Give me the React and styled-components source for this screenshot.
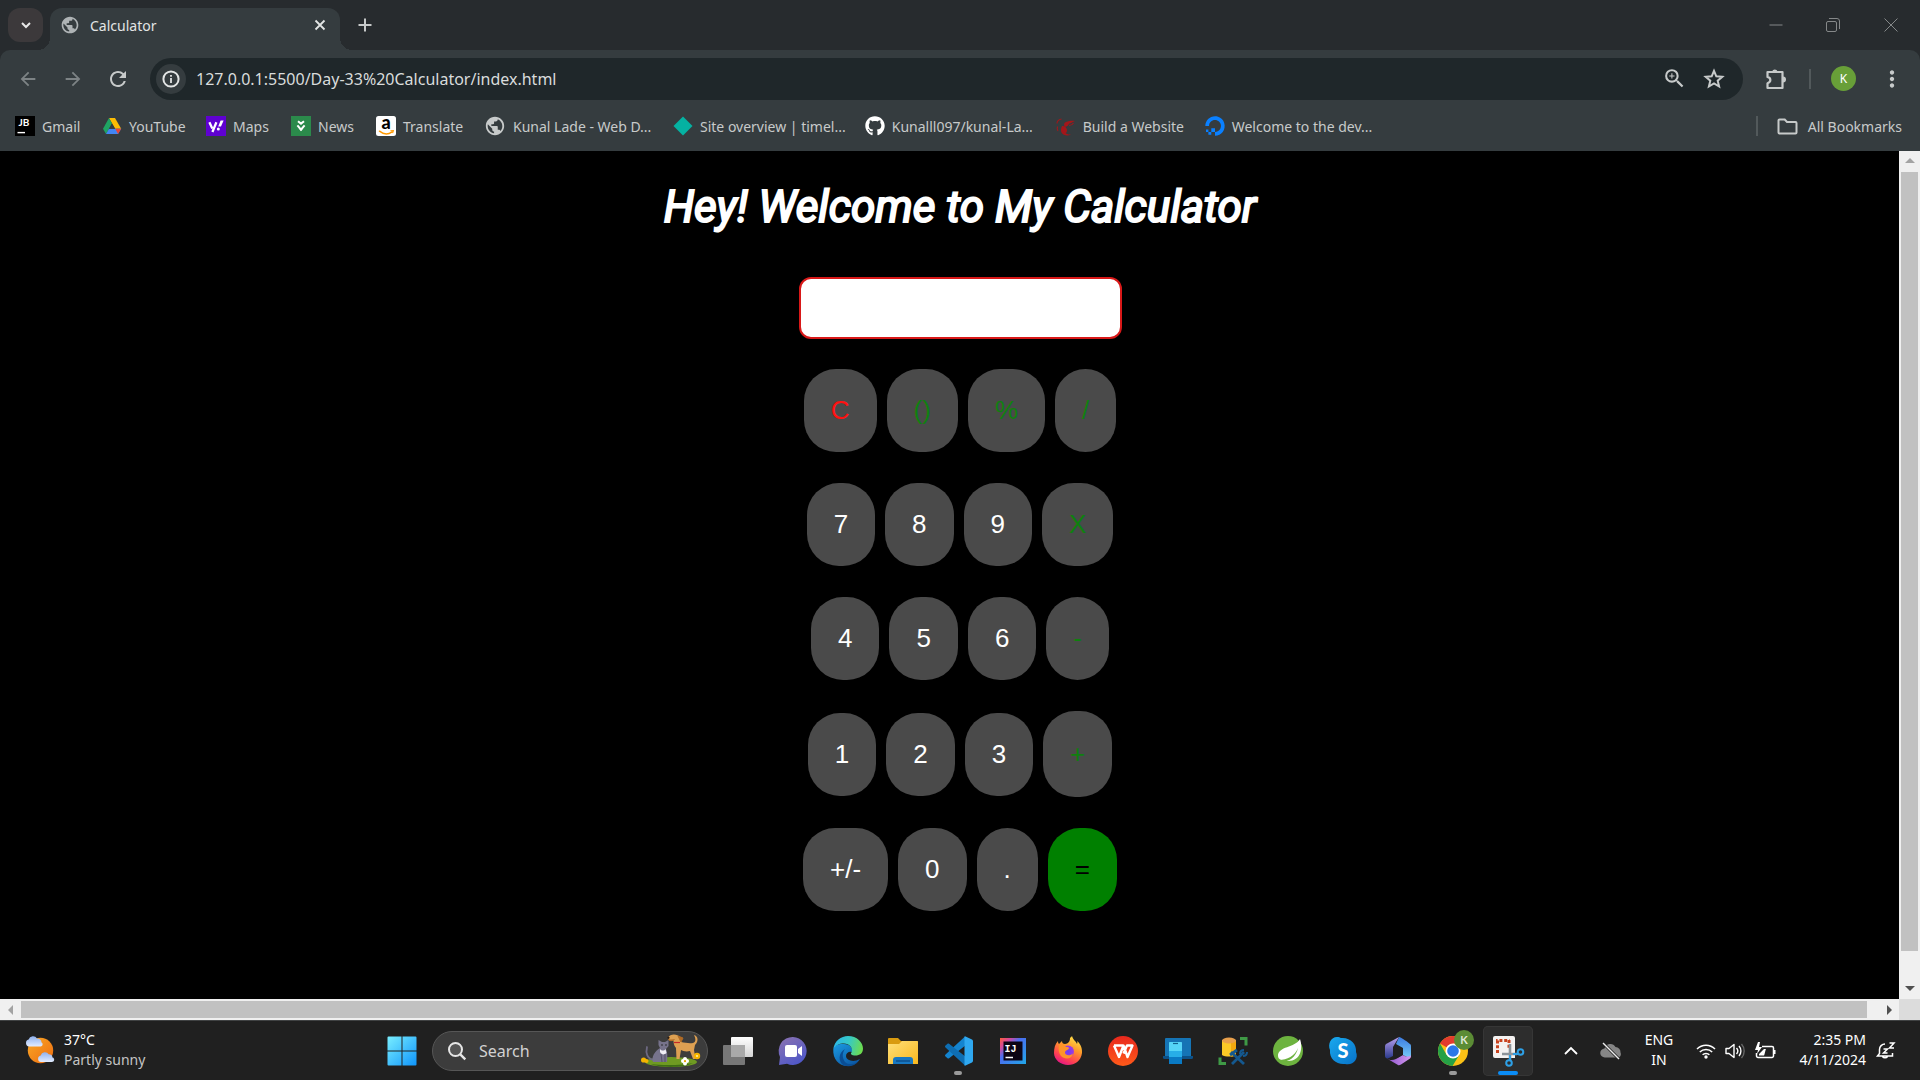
import React, { useState } from "react";
import styled, { createGlobalStyle, css } from "styled-components";
import { FaGithub, FaDigitalOcean } from "react-icons/fa";
import {
  MdPublic,
  MdArrowBack,
  MdArrowForward,
  MdRefresh,
  MdMoreVert,
  MdZoomIn,
} from "react-icons/md";

const GlobalStyle = createGlobalStyle`
  *, *::before, *::after { box-sizing: border-box; }
  body { margin: 0; background: #000; overflow: hidden; }
  button, input { font: inherit; color: inherit; }
  button { border: 0; padding: 0; background: none; cursor: pointer; }
  svg { display: block; flex: none; overflow: visible; }
`;

const Desktop = styled.div`
  height: 100vh;
  display: flex;
  flex-direction: column;
  overflow: hidden;
  font-family: "Noto Sans", "Open Sans", sans-serif;
  font-size: 14px;
  color: #c7caca;
`;

/* ---------- browser frame ---------- */

const TabStrip = styled.header`
  display: flex;
  align-items: flex-end;
  height: 50px;
  padding-left: 8px;
  background: #272b2e;
`;

const TabSearch = styled.button`
  width: 35px;
  height: 34px;
  margin: 0 7px 8px 0;
  border-radius: 12px;
  display: grid;
  place-items: center;
  background: #3c393b;
`;

const Tab = styled.div`
  position: relative;
  display: flex;
  align-items: center;
  gap: 10px;
  width: 290px;
  height: 42px;
  padding: 0 12px 8px 10px;
  border-radius: 12px 12px 0 0;
  background: #353c3f;
  color: #e3e5e5;

  &::before,
  &::after {
    content: "";
    position: absolute;
    bottom: 0;
    width: 12px;
    height: 12px;
  }
  &::before {
    right: 100%;
    background: radial-gradient(circle at 0 0, transparent 12px, #353c3f 12px);
  }
  &::after {
    left: 100%;
    background: radial-gradient(circle at 100% 0, transparent 12px, #353c3f 12px);
  }
`;

const TabTitle = styled.span`
  flex: 1;
`;

const IconButton = styled.button`
  width: ${(p) => p.$w || 16}px;
  height: ${(p) => p.$h || 32}px;
  display: grid;
  place-items: center;
  color: ${(p) => p.$color || "#c7caca"};
`;

const NewTab = styled(IconButton)`
  margin: 0 0 9px 17px;
`;

const WindowControls = styled.div`
  display: flex;
  gap: 1px;
  margin-left: auto;
  align-self: stretch;
`;

const Chrome_ = styled.div`
  background: #272b2e;
`;

const Toolbar = styled.div`
  display: flex;
  align-items: center;
  height: 57px;
  padding-left: 5px;
  border-radius: 10px 10px 0 0;
  background: #353c3f;
`;

const AddressBar = styled.label`
  flex: 1;
  display: flex;
  align-items: center;
  height: 42px;
  margin-left: 10px;
  padding: 0 9px 0 6px;
  border-radius: 21px;
  background: #1f272a;
`;

const SiteInfo = styled.button`
  width: 30px;
  height: 30px;
  border-radius: 50%;
  display: grid;
  place-items: center;
  background: #353c3f;
`;

const Address = styled.input`
  flex: 1;
  min-width: 0;
  margin: 0 10px;
  padding: 0;
  border: 0;
  outline: 0;
  background: transparent;
  font-size: 16px;
  color: #d9dcdc;
`;

const Divider = styled.span`
  width: 2px;
  height: 20px;
  background: #52595b;
`;

const Avatar = styled.button`
  width: 25px;
  height: 25px;
  margin: 0 8px 0 20px;
  border-radius: 50%;
  background: #689f38;
  color: #fff;
  font-size: 12px;
`;

const Bookmarks = styled.nav`
  display: flex;
  align-items: center;
  gap: 19px;
  height: 44px;
  padding: 0 18px 6px 15px;
  background: #353c3f;
`;

const Bookmark = styled.a`
  display: flex;
  align-items: center;
  gap: 7px;
  min-width: ${(p) => p.$w}px;
  white-space: nowrap;
  color: inherit;
  text-decoration: none;
`;

const Spacer = styled.span`
  flex: 1;
`;

const AllBookmarks = styled.button`
  display: flex;
  align-items: center;
  gap: 10px;
`;

/* ---------- page ---------- */

const Viewport = styled.div`
  flex: 1;
  min-height: 0;
  display: grid;
  grid-template: minmax(0, 1fr) 21px / minmax(0, 1fr) 21px;
  background: #dcdcdc;
`;

const Page = styled.main`
  overflow: hidden;
  background: #000;
`;

const Calculator = styled.div`
  width: 100vw;
  padding-top: 29px;
  display: flex;
  flex-direction: column;
  align-items: center;
`;

const Title = styled.h1`
  margin: 0 0 43px;
  font: italic 400 44px/54px Roboto, "Liberation Sans", sans-serif;
  -webkit-text-stroke: 2px #fff;
  color: #fff;
`;

const Display = styled.input`
  width: 323px;
  height: 62px;
  margin-bottom: 30px;
  padding: 0 14px;
  border: 2px solid #d81818;
  border-radius: 12px;
  background: #fff;
  color: #000;
  font: 26px "Liberation Sans", sans-serif;
  text-align: right;
  outline: 0;
`;

const Keypad = styled.div`
  display: flex;
  flex-direction: column;
  gap: 31px;
`;

const KeyRow = styled.div`
  display: flex;
  justify-content: center;
  align-items: center;
  gap: 10px;
`;

const Key = styled.button`
  height: ${(p) => (p.$tall ? 86 : 83)}px;
  padding: 0 27px;
  border-radius: 32px;
  background: ${(p) => p.$bg || "#4a4a4a"};
  color: ${(p) => p.$color || "#fff"};
  font: 26px "Liberation Sans", Arial, sans-serif;
`;

const scrollbar = css`
  display: flex;
  align-items: center;
  background: #f0f0f0;
`;

const VScroll = styled.div`
  ${scrollbar}
  flex-direction: column;
`;

const HScroll = styled.div`
  ${scrollbar}
`;

const VThumb = styled.div`
  flex: 1;
  width: 17px;
  margin-bottom: 27px;
  background: #c1c1c1;
`;

const HThumb = styled.div`
  flex: 1;
  height: 17px;
  margin-right: 11px;
  background: #c1c1c1;
`;

const ScrollArrow = styled.button`
  width: 21px;
  height: 21px;
  display: grid;
  place-items: center;
  color: ${(p) => (p.$off ? "#a3a3a3" : "#505050")};
`;

/* ---------- taskbar ---------- */

const Taskbar = styled.footer`
  display: grid;
  grid-template-columns: 1fr auto 1fr;
  align-items: center;
  height: 60px;
  padding-right: 10px;
  border-top: 1px solid #404243;
  background: #202020;
  line-height: 20px;
  color: #fff;
`;

const Weather = styled.button`
  justify-self: start;
  display: flex;
  align-items: center;
  gap: 9px;
  padding: 0 0 2px 25px;
  text-align: left;
`;

const Muted = styled.span`
  display: block;
  color: #c4c4c4;
`;

const Apps = styled.div`
  display: flex;
  align-items: center;
  gap: 5px;
`;

const TaskButton = styled.button`
  position: relative;
  width: 50px;
  height: 50px;
  display: grid;
  place-items: center;
  border-radius: 5px;
  ${(p) => p.$active && "background: #2d2d2d; box-shadow: inset 0 0 0 1px #363636;"}

  &::after {
    content: "";
    position: absolute;
    bottom: 1px;
    width: ${(p) => (p.$active ? 20 : 8)}px;
    height: 4px;
    border-radius: 2px;
    background: ${(p) => (p.$active ? "#0a8cf5" : p.$running ? "#9a9a9a" : "transparent")};
  }
`;

const SearchBox = styled.label`
  display: flex;
  align-items: center;
  gap: 13px;
  width: 276px;
  height: 40px;
  padding: 0 4px 0 15px;
  border: 1px solid #565656;
  border-radius: 20px;
  background: #3c3c3c;
`;

const SearchInput = styled.input`
  flex: 1;
  min-width: 0;
  padding: 0;
  border: 0;
  outline: 0;
  background: transparent;
  font-size: 16px;
  &::placeholder {
    color: #d2d2d2;
    opacity: 1;
  }
`;

const Tray = styled.div`
  justify-self: end;
  display: flex;
  align-items: center;
  padding-right: 14px;
`;

const Language = styled.button`
  width: 40px;
  margin: 0 17px 2px 8px;
  text-align: center;
`;

const Status = styled.button`
  display: flex;
  align-items: center;
  gap: 9px;
`;

const Clock = styled.button`
  width: 80px;
  margin: 0 10px 2px;
  white-space: nowrap;
  display: flex;
  flex-direction: column;
  align-items: flex-end;
`;

/* ---------- drawings ---------- */

const Svg = ({ w = 20, h = w, box, children }) => (
  <svg width={w} height={h} viewBox={box || `0 0 ${w} ${h}`} fill="none" aria-hidden="true">
    {children}
  </svg>
);

const textProps = { fontFamily: "Lato, sans-serif", textAnchor: "middle" };

const JetBrains = () => (
  <Svg>
    <rect width="20" height="20" fill="#000" />
    <text x="9" y="10" fontSize="10" fontWeight="700" fill="#fff" {...textProps}>JB</text>
    <path d="M2.5 16.6h7.5" stroke="#fff" strokeWidth="1.4" />
  </Svg>
);
const Drive = () => (
  <Svg>
    <path d="M7 2h6l6.2 10.8h-6z" fill="#fbbc04" />
    <path d="M7 2l3 5.4L4 18 1 12.8z" fill="#1fa463" />
    <path d="M7 12.8h12.2L16 18H4z" fill="#4285f4" />
    <path d="M13.3 12.8h5.9L16 18z" fill="#ea4335" />
    <path d="M10 7.6l3 5.2H7z" fill="#353c3f" />
  </Svg>
);
const Yahoo = () => (
  <Svg>
    <rect width="20" height="20" fill="#5f01d1" />
    <path d="M3.4 6.3l2.9 6.2M10.4 6.3L6.4 16" stroke="#fff" strokeWidth="2.3" />
    <path d="M14.6 4.6h3L15 10.6h-2.8z" fill="#fff" />
    <circle cx="12.3" cy="13" r="1.5" fill="#fff" />
  </Svg>
);
const News = () => (
  <Svg>
    <rect width="20" height="20" fill="#2b8a4b" />
    <path d="M7 5.2l3 2.4 3-2.4M6.4 9.4L10 13.6l3.6-4.2" stroke="#fff" strokeWidth="2" />
    <path d="M8 12.5h4L10 15z" fill="#fff" />
  </Svg>
);
const Amazon = () => (
  <Svg>
    <rect width="20" height="20" rx="2.5" fill="#fff" />
    <text x="10" y="13.4" fontSize="18" fontWeight="900" fill="#000" {...textProps}>a</text>
    <path d="M3.5 15.2c4 3.2 9 3.2 12.6.7" stroke="#f90" strokeWidth="1.5" strokeLinecap="round" />
    <path d="M14.4 14.8l3-.2-.8 2.6" stroke="#f90" strokeWidth="1.1" />
  </Svg>
);
const Diamond = () => (
  <Svg><path d="M10 .5L19.5 10 10 19.5.5 10z" fill="#05b2a2" /></Svg>
);
const Build = () => (
  <Svg>
    <path d="M9 6.5c3-1.6 6.5-2 10-1.5-2 .6-2.5 1.6-4 2-1.200.4-2 .7-2.600 1.700-.9 1.500-3 2.500-4.200 2.100C9 10 7 8.500 9 6.500z" fill="#a4161a" />
    <path d="M6.500 10.500c-.5 5 4 8.500 8.500 8-3 2-8 1-9.500-2-1-2-.5-4.500 1-6z" fill="#a4161a" />
    <path d="M6 10c3 0 5 2 5 4.500 0 1.500-1 3-2.500 3-2.500-.5-4-4-2.500-7.500z" fill="#a4161a" />
    <path d="M1 7.500c0-2 2-4 4.500-4.500M2 15c-1-1.500-1-3-.5-4.500M13 9.500c2 0 3.500-1 4.500-2.500" stroke="#a4161a" strokeWidth="1.100" />
  </Svg>
);
const Star = () => (
  <Svg w={22} h={22}>
    <path d="M11 2.800l2.300 5.500 6 .5-4.600 3.900 1.400 5.800-5.100-3.100-5.100 3.100 1.400-5.800L2.700 8.800l6-.5z" stroke="currentColor" strokeWidth="2" />
  </Svg>
);
const FolderLine = () => (
  <Svg w={21} h={17}>
    <path d="M2.500 1.500h5.200l2.300 2.500h8.500a1 1 0 0 1 1 1v9.500a1 1 0 0 1-1 1h-16a1 1 0 0 1-1-1v-12a1 1 0 0 1 1-1z" stroke="#c7caca" strokeWidth="2" />
  </Svg>
);
const Puzzle = () => (
  <Svg w={22} h={22}>
    <path d="M2.500 4h15v16h-15v-4.800c3.800-1.300 3.800-5.200 0-6.300z" stroke="#c7caca" strokeWidth="2.200" strokeLinejoin="round" />
    <path d="M7 3.500a3 3 0 0 1 5.600 0zM18 8.500a3 3 0 0 1 0 6z" fill="#c7caca" />
  </Svg>
);

const Sunny = () => (
  <Svg w={30} h={30}>
    <defs>
      <linearGradient id="sun" x1="0" y1="0" x2="1" y2="1"><stop stopColor="#f9a825" /><stop offset="1" stopColor="#ee6c10" /></linearGradient>
      <linearGradient id="cloud" x1="0" y1="0" x2="0" y2="1"><stop stopColor="#8fb1ee" /><stop offset="1" stopColor="#e2ecff" /></linearGradient>
    </defs>
    <circle cx="15.500" cy="15.500" r="12.700" fill="url(#sun)" />
    <path d="M4 11.500a3.600 3.600 0 0 1-.4-7A4.600 4.600 0 0 1 12 3.600a4 4 0 0 1 4.500 4c1.500.3 1.800 3.900-1 3.900z" fill="url(#cloud)" />
    <path d="M16 27a3.300 3.300 0 0 1-.3-6.500 4.400 4.400 0 0 1 8-1.200 3.700 3.700 0 0 1 3.800 3.200c2.500.6 2.300 4.500-.8 4.500z" fill="url(#cloud)" />
  </Svg>
);
const Start = () => (
  <Svg w={30} h={30}>
    <defs><linearGradient id="win" gradientUnits="userSpaceOnUse" x1="0" y1="0" x2="30" y2="30"><stop stopColor="#7bf0ff" /><stop offset="1" stopColor="#0d93fb" /></linearGradient></defs>
    <path d="M1.500.5h13v14h-14v-13a1 1 0 0 1 1-1zM15.500.5h13a1 1 0 0 1 1 1v13h-14zM.5 15.500h14v14h-13a1 1 0 0 1-1-1zM15.500 15.500h14v13a1 1 0 0 1-1 1h-13z" fill="url(#win)" />
  </Svg>
);
const Pets = () => (
  <Svg w={62} h={34}>
    <ellipse cx="30" cy="28" rx="26" ry="5" fill="#6f9a22" />
    <path d="M10 30c10 4 32 4 42-1-8 2-30 3-42 1z" fill="#3f6d15" />
    <path d="M6 13c-1.500 6 0 12 7 13" stroke="#6d6982" strokeWidth="1.800" strokeLinecap="round" />
    <path d="M12 28c-2-5 2-11 7-14l-1.500-3V6l3.500 2h3l3.500-2v6l-2.500 3c1.500 3 1.500 8 1 13z" fill="#77738c" />
    <path d="M19 15c1.500 2 4.500 2 5.500 0l1 4c-2 2-5 2-6.500-1z" fill="#f0eef5" />
    <path d="M20 20l1 8M24 20v8" stroke="#565269" />
    <circle cx="21" cy="11" r=".8" fill="#222" /><circle cx="25" cy="11" r=".8" fill="#222" />
    <path d="M27 3.500c2-3 6-4 10-2l3 2.500v4c4.500 1 8.500 1.500 12 1 3-1 3-4 1-8 4 1 5 6 1 10l-1 5 1.500 9h-2.500l-3-8c-4 1-7 0-9-1l-1.500 9h-3l-.5-11c-2-2-2.500-5-2.500-7.500-3 1-5.500 0-5.500-3z" fill="#dda052" />
    <path d="M27.500 5.500c2 2 4 1 6 0M37 2l3 6 2-4z" stroke="#b06b25" fill="#b06b25" />
    <circle cx="27.500" cy="3.800" r="1.100" fill="#2b1a10" /><path d="M33 8.500h6" stroke="#c62828" strokeWidth="1.200" />
    <g fill="#f5b400"><circle cx="2.600" cy="26" r="2.600" /><circle cx="5.500" cy="27" r="2" /><circle cx="56" cy="22" r="3.200" /></g>
    <circle cx="56" cy="22" r="1" fill="#fff2b0" />
    <g fill="#fff"><circle cx="42" cy="27" r="2" /><circle cx="46" cy="27" r="2" /><circle cx="44" cy="25" r="2" /><circle cx="44" cy="29.500" r="2" /></g>
    <circle cx="44" cy="27.200" r="1.100" fill="#e6a400" />
  </Svg>
);
const TaskView = () => (
  <Svg w={30} h={28}>
    <defs><linearGradient id="tv" x1="0" y1="0" x2="0" y2="1"><stop stopColor="#fff" /><stop offset="1" stopColor="#d4d4d4" /></linearGradient></defs>
    <rect x="8" width="22" height="20" rx="1" fill="url(#tv)" />
    <rect y="8" width="22" height="20" rx="1" fill="#777" />
    <path d="M8 8h14v12H8z" fill="#a9a9a9" />
  </Svg>
);
const Chat = () => (
  <Svg w={30} h={30}>
    <defs><linearGradient id="chat" x1="0" y1="0" x2="0.600" y2="1"><stop stopColor="#8d73b0" /><stop offset="1" stopColor="#5058c8" /></linearGradient></defs>
    <path d="M15 1a14 14 0 1 1-6 26.800L1 29l1-8A14 14 0 0 1 15 1z" fill="url(#chat)" />
    <rect x="7" y="9" width="12" height="12" rx="2" fill="#fff" />
    <path d="M20 13l4-3v10l-4-3z" fill="#fff" />
  </Svg>
);
const Edge = () => (
  <Svg w={30} h={30}>
    <defs>
      <linearGradient id="e1" x1="0" y1="0.300" x2="1" y2="0.500"><stop stopColor="#2bb6ea" /><stop offset="0.500" stopColor="#36c9c6" /><stop offset="1" stopColor="#6ddc4e" /></linearGradient>
      <linearGradient id="e2" x1="0" y1="0" x2="0.700" y2="1"><stop stopColor="#1b9be2" /><stop offset="1" stopColor="#0b57a4" /></linearGradient>
    </defs>
    <path d="M.3 13C2 8 7 8 11 8c6 0 9 4 8 8-3-1-6 1-6 4 0 4 7 7 14 3-3 5-8 7-13 7C6 30-.5 23 .3 13z" fill="url(#e2)" />
    <path d="M12 13c-3 4-3 9 0 13 3 3 8 3 13 0-4 4-9 5-14 3.500C5 26 5 17 12 13z" fill="#0a4d94" />
    <path d="M.3 13C1.500 5 8 0 15 0c9 0 15 6.500 15 12.500 0 5-3.500 7-7.500 7-4 0-5.500-1.500-4-3C20.500 12 16.500 7.500 11 7.500 6 7.500 2 9.500.3 13z" fill="url(#e1)" />
  </Svg>
);
const Explorer = () => (
  <Svg w={30} h={30}>
    <defs><linearGradient id="fo" x1="0" y1="0" x2="1" y2="1"><stop stopColor="#ffe07a" /><stop offset="1" stopColor="#f9b81e" /></linearGradient></defs>
    <path d="M0 3a1 1 0 0 1 1-1h9l3 3h16a1 1 0 0 1 1 1v8H0z" fill="#d99b10" />
    <path d="M0 8h11l3-3h15a1 1 0 0 1 1 1v22H0z" fill="url(#fo)" />
    <path d="M5 28v-4a3 3 0 0 1 3-3h14a3 3 0 0 1 3 3v4z" fill="#1878c2" />
    <path d="M8 25h14" stroke="#0c4f8c" strokeWidth="1.500" />
  </Svg>
);
const Code = () => (
  <Svg w={30} h={30}>
    <path d="M22 .5L2.500 18.500a1.300 1.300 0 0 0 0 2l2 1.700c.5.400 1.100.400 1.600 0L23 9z" fill="#1484cf" />
    <path d="M22 29.500L2.500 11.500a1.300 1.300 0 0 1 0-2l2-1.700c.5-.4 1.100-.4 1.600 0L23 21z" fill="#0e6eb3" />
    <path d="M22 .3l7 3.200a2 2 0 0 1 1 1.700v19.600a2 2 0 0 1-1 1.700l-7 3.200c-.3 0-.6-.2-.5-.5V.8c0-.3.2-.5.5-.5z" fill="#2fa8f0" />
  </Svg>
);
const Intellij = () => (
  <Svg w={26} h={26}>
    <defs><linearGradient id="ij" x1="0" y1="0" x2="1" y2="1"><stop stopColor="#fc5e3a" /><stop offset="0.200" stopColor="#d6489a" /><stop offset="0.400" stopColor="#4a6ef0" /><stop offset="1" stopColor="#21a8e8" /></linearGradient></defs>
    <rect width="26" height="26" fill="url(#ij)" />
    <rect x="3.500" y="3.500" width="19" height="19" fill="#0c0414" />
    <text x="10.500" y="14" fontSize="10" fontWeight="700" fill="#fff" textAnchor="middle" fontFamily="Liberation Mono, monospace">IJ</text>
    <path d="M5.500 19.500h7.500" stroke="#fff" strokeWidth="1.500" />
  </Svg>
);
const Firefox = () => (
  <Svg w={30} h={30}>
    <defs>
      <linearGradient id="ff" x1="0.800" y1="0" x2="0.300" y2="1"><stop stopColor="#ffe84a" /><stop offset="0.400" stopColor="#ff9a2a" /><stop offset="0.750" stopColor="#ff4350" /><stop offset="1" stopColor="#e31587" /></linearGradient>
      <radialGradient id="fp"><stop stopColor="#6a3ff0" /><stop offset="1" stopColor="#a23be0" /></radialGradient>
    </defs>
    <path d="M1 17c0-5 1-9 4-12 0 2 .5 2.500 1 3l3-3c0 2 1 3 3 3 3-.5 5-2 5-6 1-1 2-2 2-2 1 4 4 5 5 8 .5-1 .5-2 .3-3 4 4 5 8 4.700 12C28 25 22 29 15 29S1 24 1 17z" fill="url(#ff)" />
    <circle cx="15" cy="15.500" r="6" fill="url(#fp)" />
    <path d="M6 9c3-1 6 0 7 2 2 0 3 .3 3 1.500-1 1.500-4 2-4 4 0 3 5 4 8 1-1 5-6 6-10 4s-5-8-4-12.500z" fill="#ff9428" />
  </Svg>
);
const Wps = () => (
  <Svg w={30} h={30}>
    <defs><linearGradient id="wp" x1="0" y1="0" x2="0" y2="1"><stop stopColor="#e8281d" /><stop offset="1" stopColor="#ff5a1a" /></linearGradient></defs>
    <circle cx="15" cy="15" r="15" fill="url(#wp)" />
    <path d="M6 9.500h9.500M6 9.500l5 11.500 4.500-11.500 4 11.500 5-11.500h-5.500l-3.500 8" stroke="#fff" strokeWidth="2.400" strokeLinejoin="round" />
  </Svg>
);
const PhoneLink = () => (
  <Svg w={30} h={28}>
    <path d="M3 1h24a1 1 0 0 1 1 1v17H2V2a1 1 0 0 1 1-1z" fill="#1574b5" />
    <path d="M0 19h30v1.500a1.500 1.500 0 0 1-1.500 1.500h-27A1.500 1.500 0 0 1 0 20.500z" fill="#0c5188" />
    <rect x="6" y="5" width="13" height="22" rx="1" fill="#27aee8" />
    <path d="M6 6a1 1 0 0 1 1-1h11a1 1 0 0 1 1 1v8H6z" fill="#55d5f7" /><path d="M6 20h13v7H6z" fill="#0a7ac4" />
    <path d="M10 6.500h5" stroke="#11638f" strokeWidth="1.200" />
  </Svg>
);
const Database = () => (
  <Svg w={30} h={30}>
    <path d="M22 2.500h6v7M8 27.500H2v-6" stroke="#3f9a46" strokeWidth="3" />
    <path d="M4 4h14v15c-3 2-11 2-14 0z" fill="#fbc926" />
    <path d="M13 4h5v15c-1 1-3 1.500-5 1.500z" fill="#f2a90f" />
    <ellipse cx="11" cy="4.500" rx="7" ry="3" fill="#e8a04c" />
    <path d="M14 28L26 16M13 16l13 12M12 19l7-5" stroke="#14588f" strokeWidth="2.800" />
    <path d="M22 18c0-3 2-4 4-4M25 20c2 0 4-1 4-4" stroke="#14588f" strokeWidth="2" />
  </Svg>
);
const Spring = () => (
  <Svg w={30} h={30}>
    <circle cx="15" cy="15" r="15" fill="#6db33f" />
    <path d="M27 3c3 9 1 22-12 22-5 0-10-1-10-5C5 10 22 12 27 3z" fill="#fff" />
    <path d="M6 24c8 0 16-4 19-12-2 9-9 14-17 14z" fill="#6db33f" />
  </Svg>
);
const Skype = () => (
  <Svg w={28} h={28}>
    <defs><linearGradient id="sk" x1="0" y1="0" x2="1" y2="1"><stop stopColor="#19a9ee" /><stop offset="1" stopColor="#0872c8" /></linearGradient></defs>
    <path d="M8 0c2 0 3 .5 4 1 9-1 16 6 15 14 3 7-3 14-11 12C8 28 0 22 1 13-1.500 7 2 0 8 0z" fill="url(#sk)" />
    <text x="14" y="21" fontSize="20" fontWeight="900" fill="#fff" {...textProps}>S</text>
  </Svg>
);
const Office = () => (
  <Svg w={28} h={30}>
    <defs>
      <linearGradient id="o1" x1="0" y1="0" x2="0" y2="1"><stop stopColor="#b9a0f0" /><stop offset="1" stopColor="#2b3a8c" /></linearGradient>
      <linearGradient id="o2" x1="0" y1="0" x2="0" y2="1"><stop stopColor="#3c7be0" /><stop offset="1" stopColor="#74c8f5" /></linearGradient>
      <linearGradient id="o3" x1="0" y1="0" x2="1" y2="0"><stop stopColor="#8a4fc9" /><stop offset="1" stopColor="#d59af0" /></linearGradient>
    </defs>
    <path d="M15 1L3 7.500C1.500 8 1 9 1 11v9c0 2 2 3 4 2l4-2v-9z" fill="url(#o1)" />
    <path d="M15 1c2 0 10 6 11 7s1 1 1 3v9c-2 2-5 1-8-1v-7l-7-4z" fill="url(#o2)" />
    <path d="M2 22l12 7c1 .5 2 0 3-.5l9-6c1-1 1-2 1-3-3 2-6 1-8-.5l-7 4c-4 2-7 1-10-1z" fill="url(#o3)" />
    <path d="M14 10l5 2.500v6l-5 3-5-3v-6z" fill="#202020" />
  </Svg>
);
const Chrome = () => (
  <Svg w={30} h={30}>
    <circle cx="15" cy="15" r="15" fill="#fbc116" />
    <path d="M15 15L2 7.500A15 15 0 0 1 28 7.500H15z" fill="#e33b2e" />
    <path d="M2 7.500A15 15 0 0 0 14.500 30L21.500 18.500 8.500 18.800z" fill="#25a146" />
    <circle cx="15" cy="15" r="7.500" fill="#fff" /><circle cx="15" cy="15" r="5.800" fill="#2a77e8" />
    <circle cx="26" cy="4" r="10" fill="#5b8c35" />
    <text x="26" y="8" fontSize="11" fontWeight="700" fill="#dfe8d6" {...textProps}>K</text>
  </Svg>
);
const Snip = () => (
  <Svg w={30} h={30}>
    <path d="M2 0h18a2 2 0 0 1 2 2v20H2a2 2 0 0 1-2-2V2a2 2 0 0 1 2-2z" fill="#f4f2f1" />
    <path d="M4.500 17V4.500h12" stroke="#c9431f" strokeWidth="3" strokeDasharray="3 1.800" />
    <path d="M16 4v9" stroke="#c9431f" strokeWidth="3" strokeDasharray="3 1.800" />
    <path d="M17 8v16M9 18h15" stroke="#8d949a" strokeWidth="2.600" />
    <path d="M17 19v5M20 18h5" stroke="#2ea0e6" strokeWidth="2" />
    <circle cx="16" cy="27" r="2.800" stroke="#2ea0e6" strokeWidth="2" /><circle cx="27.500" cy="16" r="2.800" stroke="#2ea0e6" strokeWidth="2" />
  </Svg>
);

const bookmarks = [
  ["Gmail", <JetBrains />, 68],
  ["YouTube", <Drive />, 85],
  ["Maps", <Yahoo />, 66],
  ["News", <News />, 66],
  ["Translate", <Amazon />, 89],
  ["Kunal Lade - Web D...", <MdPublic size={22} />, 170],
  ["Site overview | timel...", <Diamond />, 172],
  ["Kunalll097/kunal-La...", <FaGithub size={20} color="#fff" />, 172],
  ["Build a Website", <Build />, 130],
  ["Welcome to the dev...", <FaDigitalOcean size={20} color="#0a80ff" />, 172],
];

const green = "#0f800f";
const keyRows = [
  [{ k: "C", color: "#ff1111" }, { k: "()", color: green }, { k: "%", color: green }, { k: "/", color: green }],
  [{ k: "7" }, { k: "8" }, { k: "9" }, { k: "X", color: green }],
  [{ k: "4" }, { k: "5" }, { k: "6" }, { k: "-", color: green }],
  [{ k: "1" }, { k: "2" }, { k: "3" }, { k: "+", color: green, tall: true }],
  [{ k: "+/-" }, { k: "0" }, { k: "." }, { k: "=", color: "#000", bg: "#008000" }],
];

const apps = [
  ["Task view", TaskView],
  ["Chat", Chat],
  ["Edge", Edge],
  ["File Explorer", Explorer],
  ["Visual Studio Code", Code, { $running: true }],
  ["IntelliJ IDEA", Intellij],
  ["Firefox", Firefox],
  ["WPS Office", Wps],
  ["Phone Link", PhoneLink],
  ["Database tools", Database],
  ["Spring Tools", Spring],
  ["Skype", Skype],
  ["Microsoft 365", Office],
  ["Chrome", Chrome, { $running: true }],
  ["Snipping Tool", Snip, { $active: true }],
];

const arrows = {
  up: "M1 7l5-5 5 5z",
  down: "M1 3l5 5 5-5z",
  left: "M8 1L3 6l5 5z",
  right: "M4 1l5 5-5 5z",
};
const Arrow = ({ dir, off }) => (
  <ScrollArrow $off={off} aria-label={`Scroll ${dir}`}>
    <Svg w={12}><path d={arrows[dir]} fill="currentColor" /></Svg>
  </ScrollArrow>
);

export default function App() {
  const [value, setValue] = useState("");
  const press = (k) => setValue((v) => (k === "C" ? "" : k === "=" ? v : v + k));

  return (
    <Desktop>
      <GlobalStyle />
      <TabStrip>
        <TabSearch aria-label="Search tabs">
          <Svg w={12}><path d="M2 4l4 4 4-4" stroke="#e8e8e8" strokeWidth="2" /></Svg>
        </TabSearch>
        <Tab>
          <MdPublic size={20} color="#aeb3b5" />
          <TabTitle>Calculator</TabTitle>
          <IconButton aria-label="Close tab" $color="#e3e5e5">
            <Svg w={12}><path d="M1.500 1.500l9 9M10.500 1.500l-9 9" stroke="currentColor" strokeWidth="1.800" /></Svg>
          </IconButton>
        </Tab>
        <NewTab aria-label="New tab">
          <Svg w={14}><path d="M7 .5v13M.5 7h13" stroke="currentColor" strokeWidth="2" /></Svg>
        </NewTab>
        <WindowControls>
          <IconButton $w={56} $h={50} $color="#858889" aria-label="Minimize">
            <Svg w={14}><path d="M.5 7h13" stroke="currentColor" /></Svg>
          </IconButton>
          <IconButton $w={56} $h={50} $color="#858889" aria-label="Restore">
            <Svg w={14}><rect x=".5" y="3.500" width="10" height="10" rx="1.500" stroke="currentColor" /><path d="M3 .5h8a2.500 2.500 0 0 1 2.500 2.500v8" stroke="currentColor" /></Svg>
          </IconButton>
          <IconButton $w={58} $h={50} $color="#858889" aria-label="Close">
            <Svg w={14}><path d="M.5.5l13 13M13.500.5l-13 13" stroke="currentColor" /></Svg>
          </IconButton>
        </WindowControls>
      </TabStrip>

      <Chrome_>
        <Toolbar>
          <IconButton $w={45} $color="#7d8385" aria-label="Back"><MdArrowBack size={22} /></IconButton>
          <IconButton $w={45} $color="#7d8385" aria-label="Forward"><MdArrowForward size={22} /></IconButton>
          <IconButton $w={45} aria-label="Reload"><MdRefresh size={24} /></IconButton>
          <AddressBar>
            <SiteInfo aria-label="Site information">
              <Svg w={18}><circle cx="9" cy="9" r="7.600" stroke="#e3e5e5" strokeWidth="2" /><path d="M9 8v5M9 5v1.800" stroke="#e3e5e5" strokeWidth="1.800" /></Svg>
            </SiteInfo>
            <Address aria-label="Address" defaultValue="127.0.0.1:5500/Day-33%20Calculator/index.html" />
            <IconButton $w={40} aria-label="Zoom"><MdZoomIn size={25} /></IconButton>
            <IconButton $w={40} aria-label="Bookmark this page"><Star /></IconButton>
          </AddressBar>
          <IconButton $w={66} aria-label="Extensions"><Puzzle /></IconButton>
          <Divider />
          <Avatar aria-label="Profile">K</Avatar>
          <IconButton $w={56} aria-label="Menu"><MdMoreVert size={26} /></IconButton>
        </Toolbar>
      </Chrome_>

      <Bookmarks>
        {bookmarks.map(([name, icon, w]) => (
          <Bookmark key={name} href="#" $w={w}>{icon}{name}</Bookmark>
        ))}
        <Spacer />
        <Divider />
        <AllBookmarks><FolderLine />All Bookmarks</AllBookmarks>
      </Bookmarks>

      <Viewport>
        <Page>
          <Calculator>
            <Title>Hey! Welcome to My Calculator</Title>
            <Display aria-label="Result" value={value} onChange={(e) => setValue(e.target.value)} />
            <Keypad>
              {keyRows.map((row, i) => (
                <KeyRow key={i}>
                  {row.map(({ k, color, bg, tall }) => (
                    <Key key={k} $color={color} $bg={bg} $tall={tall} onClick={() => press(k)}>{k}</Key>
                  ))}
                </KeyRow>
              ))}
            </Keypad>
          </Calculator>
        </Page>
        <VScroll><Arrow dir="up" off /><VThumb /><Arrow dir="down" /></VScroll>
        <HScroll><Arrow dir="left" off /><HThumb /><Arrow dir="right" /></HScroll>
      </Viewport>

      <Taskbar>
        <Weather>
          <Sunny />
          <span>37°C<Muted>Partly sunny</Muted></span>
        </Weather>
        <Apps>
          <TaskButton aria-label="Start"><Start /></TaskButton>
          <SearchBox>
            <Svg w={18}><circle cx="7.500" cy="7.500" r="6.500" stroke="#e6e6e6" strokeWidth="2" fill="#555" /><path d="M12.300 12.300l5 5" stroke="#e6e6e6" strokeWidth="2.400" /></Svg>
            <SearchInput aria-label="Search" placeholder="Search" />
            <Pets />
          </SearchBox>
          {apps.map(([name, Icon, state]) => (
            <TaskButton key={name} aria-label={name} {...state}><Icon /></TaskButton>
          ))}
        </Apps>
        <Tray>
          <IconButton $w={40} aria-label="Show hidden icons">
            <Svg w={14}><path d="M1 10l6-6 6 6" stroke="#fff" strokeWidth="1.800" /></Svg>
          </IconButton>
          <IconButton $w={40} aria-label="OneDrive">
            <Svg w={22} h={18}><path d="M5 15.500a4.500 4.500 0 0 1-.5-9A6 6 0 0 1 15.500 5a5 5 0 0 1 5 5.500c1 2 0 5-3 5z" fill="#858585" /><path d="M3 1l16 16" stroke="#202020" strokeWidth="3" /><path d="M3 1l16 16" stroke="#eee" strokeWidth="1.400" /></Svg>
          </IconButton>
          <Language>ENG<br />IN</Language>
          <Status aria-label="Network, sound and battery">
            <Svg w={20} h={16}><path d="M1 6a12.700 12.700 0 0 1 18 0M3.800 9a8.800 8.800 0 0 1 12.400 0M6.600 11.800a4.800 4.800 0 0 1 6.800 0" stroke="#fff" strokeWidth="1.500" /><circle cx="10" cy="14" r="1.700" fill="#fff" /></Svg>
            <Svg w={20} h={18}><path d="M1 6.500h3l5-4v13l-5-4H1z" stroke="#fff" strokeWidth="1.400" strokeLinejoin="round" /><path d="M11.500 6a4.500 4.500 0 0 1 0 6M14 4a7.500 7.500 0 0 1 0 10" stroke="#fff" strokeWidth="1.400" /><path d="M16.500 2a10.500 10.500 0 0 1 0 14" stroke="#666" strokeWidth="1.400" /></Svg>
            <Svg w={22} h={18}><path d="M8 4.500h10a1.500 1.500 0 0 1 1.500 1.500v8a1.500 1.500 0 0 1-1.500 1.500H4A1.500 1.500 0 0 1 2.500 14v-3" stroke="#fff" strokeWidth="1.500" /><path d="M10 7h7.500v6.500H5V12zM20 8h1.500v4H20zM4 0L1 8h3l-1 4 5-7H5l1-5z" fill="#fff" /><path d="M12 6.500h6V14h-8z" fill="#202020" /></Svg>
          </Status>
          <Clock><span>2:35 PM</span><span>4/11/2024</span></Clock>
          <IconButton $w={20} aria-label="Notifications">
            <Svg w={20} h={20}><path d="M9 3a5.500 5.500 0 0 0-5.500 5.500v4L1.500 15h15v-3M6.500 15.500a3 3 0 0 0 5 0" stroke="#fff" strokeWidth="1.500" /><path d="M7.500 8h4l-4 4h4M13.500 2h4.500l-4.500 5h4.500" stroke="#fff" strokeWidth="1.500" /></Svg>
          </IconButton>
        </Tray>
      </Taskbar>
    </Desktop>
  );
}
